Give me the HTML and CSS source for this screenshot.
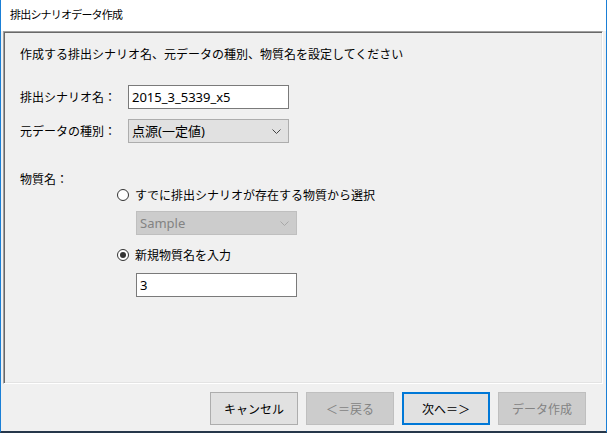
FILE: index.html
```html
<!DOCTYPE html>
<html lang="ja">
<head>
    <meta charset="UTF-8">
    <meta name="viewport" content="width=device-width, initial-scale=1.0">
    <title>排出シナリオデータ作成</title>
    <link rel="stylesheet" href="styles.css">
</head>
<body>
    <div class="window">
        <div class="titlebar">排出シナリオデータ作成</div>
        <div class="panel">
            <p class="lead">作成する排出シナリオ名、元データの種別、物質名を設定してください</p>
            <div class="field first">
                <label class="field-label" for="scenario">排出シナリオ名：</label>
                <input class="textbox" type="text" id="scenario" value="2015_3_5339_x5">
            </div>
            <div class="field">
                <span class="field-label">元データの種別：</span>
                <div class="combo">
                    <span>点源(一定値)</span>
                    <svg class="chevron" width="9" height="5" viewBox="0 0 9 5"><path d="M0.5 0.5 L4.5 4.5 L8.5 0.5" fill="none" stroke="#444" stroke-width="1"/></svg>
                </div>
            </div>
            <div class="section-label">物質名：</div>
            <div class="choices">
                <div class="radio-row">
                    <span class="radio"></span>
                    <span>すでに排出シナリオが存在する物質から選択</span>
                </div>
                <div class="combo disabled sub">
                    <span>Sample</span>
                    <svg class="chevron" width="9" height="5" viewBox="0 0 9 5"><path d="M0.5 0.5 L4.5 4.5 L8.5 0.5" fill="none" stroke="#a8a8a8" stroke-width="1"/></svg>
                </div>
                <div class="radio-row second">
                    <span class="radio checked"></span>
                    <span>新規物質名を入力</span>
                </div>
                <input class="textbox sub" type="text" value="3">
            </div>
        </div>
        <div class="buttons">
            <button type="button">キャンセル</button>
            <button type="button" disabled>＜＝戻る</button>
            <button type="button" class="default">次へ＝＞</button>
            <button type="button" disabled>データ作成</button>
        </div>
    </div>
</body>
</html>
```

FILE: styles.css
```css
body {
    margin: 0;
    background: #fff;
    font-family: "Noto Sans", "Noto Sans CJK JP", sans-serif;
    font-size: 12px;
    color: #000;
}
.window {
    width: 607px;
    height: 433px;
    box-sizing: border-box;
    border-left: 1px solid #1a7fd6;
    border-right: 1px solid #1a7fd6;
    border-bottom: 2px solid #26374a;
    background: #f0f0f0;
    display: flex;
    flex-direction: column;
}
.titlebar {
    height: 31px;
    box-sizing: border-box;
    background: #fff;
    padding: 6px 0 0 9px;
    font-family: "Noto Sans CJK JP", sans-serif;
    font-size: 11px;
    letter-spacing: -0.8px;
    line-height: 16px;
}
.panel {
    height: 353px;
    box-sizing: border-box;
    margin: 0 3px 0 2px;
    padding-left: 16px;
    border-top: 1px solid #a0a0a0;
    border-left: 1px solid #a0a0a0;
    border-right: 1px solid #fff;
    border-bottom: 1px solid #fff;
    box-shadow: inset 1px 1px #696969, inset -1px -1px #e3e3e3;
    font-family: "Noto Sans CJK JP", sans-serif;
    line-height: 16px;
}
.lead {
    margin: 14px 0 0;
}
.field {
    display: flex;
    align-items: center;
    margin-top: 10px;
}
.field.first {
    margin-top: 23px;
}
.field-label {
    width: 108px;
}
.textbox {
    width: 161px;
    height: 24px;
    box-sizing: border-box;
    margin: 0;
    padding: 0 3px;
    border: 1px solid #7a7a7a;
    background: #fff;
    font-family: "Noto Sans", "Noto Sans CJK JP", sans-serif;
    font-size: 13px;
    color: #000;
    outline: none;
}
.combo {
    width: 161px;
    height: 24px;
    box-sizing: border-box;
    padding: 0 7px 0 3px;
    border: 1px solid #adadad;
    background: #e1e1e1;
    display: flex;
    align-items: center;
    justify-content: space-between;
    font-family: "Noto Sans", "Noto Sans CJK JP", sans-serif;
    font-size: 13px;
}
.combo.disabled {
    background: #cccccc;
    border-color: #bfbfbf;
    color: #838383;
}
.section-label {
    margin-top: 28px;
}
.choices {
    margin-left: 97px;
}
.radio-row {
    display: flex;
    align-items: center;
    gap: 6px;
    height: 16px;
}
.radio-row.second {
    margin-top: 12px;
}
.radio {
    width: 12px;
    height: 12px;
    box-sizing: border-box;
    border: 1px solid #333;
    border-radius: 50%;
    background: #fff;
    display: flex;
    align-items: center;
    justify-content: center;
}
.radio.checked::after {
    content: "";
    width: 6px;
    height: 6px;
    border-radius: 50%;
    background: #333;
}
.sub {
    display: flex;
    margin-left: 19px;
    margin-top: 8px;
}
input.sub {
    margin-top: 10px;
}
.buttons {
    display: flex;
    justify-content: flex-end;
    gap: 8px;
    padding: 8px 20px 0 0;
}
button {
    width: 88px;
    height: 33px;
    box-sizing: border-box;
    border: 1px solid #adadad;
    background: #e1e1e1;
    font-family: "Noto Sans CJK JP", sans-serif;
    font-size: 12px;
    color: #000;
    padding: 0;
}
button:disabled {
    background: #cccccc;
    border-color: #bfbfbf;
    color: #838383;
}
button.default {
    border: 2px solid #0078d7;
}
```
